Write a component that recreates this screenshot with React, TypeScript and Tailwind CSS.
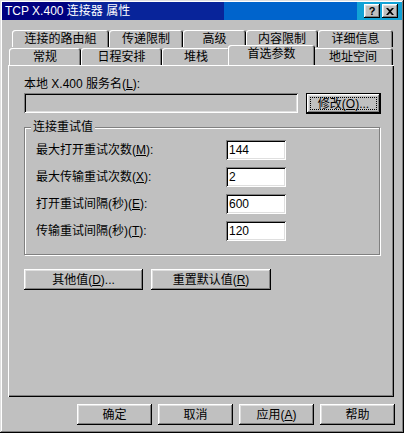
import React from 'react';

const raised =
  'bg-[#c0c0c0] shadow-[inset_-1px_-1px_0_#000,inset_1px_1px_0_#fff,inset_-2px_-2px_0_#808080,inset_2px_2px_0_#dfdfdf]';
const sunken =
  'shadow-[inset_1px_1px_0_#808080,inset_-1px_-1px_0_#fff,inset_2px_2px_0_#000,inset_-2px_-2px_0_#dfdfdf]';

const Key = ({ k }: { k: string }) => <u className="underline underline-offset-1">{k}</u>;

const Tab = ({ label, w, selected }: { label: string; w: number; selected?: boolean }) => (
  <div
    style={{ width: w }}
    className={`flex items-center justify-center rounded-t-[3px] bg-[#c0c0c0] shadow-[inset_1px_1px_0_#fff,inset_-1px_0_0_#000,inset_-2px_0_0_#808080] ${
      selected ? 'relative z-10 -mx-[2px] -mt-[2px] h-[20px] pb-[2px]' : 'h-[17px] pt-[1px]'
    }`}
  >
    {label}
  </div>
);

const Btn = ({ children, w }: { children: React.ReactNode; w: number }) => (
  <div style={{ width: w }} className={`flex h-[21px] items-center justify-center ${raised}`}>
    {children}
  </div>
);

const rows = [
  { label: '最大打开重试次数', key: 'M', value: '144' },
  { label: '最大传输重试次数', key: 'X', value: '2' },
  { label: '打开重试间隔(秒)', key: 'E', value: '600' },
  { label: '传输重试间隔(秒)', key: 'T', value: '120' },
];

export default function App() {
  return (
    <div className="h-[433px] w-[404px] overflow-hidden bg-[#c0c0c0] font-['Liberation_Sans','Noto_Sans_CJK_SC',sans-serif] text-[12px] leading-[14px] text-black shadow-[inset_-1px_-1px_0_#000,inset_1px_1px_0_#dfdfdf,inset_-2px_-2px_0_#808080,inset_2px_2px_0_#fff]">
      {/* title bar */}
      <div className="mx-[2px] mt-[2px] flex h-[18px] items-center bg-[linear-gradient(to_right,#000080_0,#000080_68px,#08249a_68px,#08249a_222px,#0064cc_222px,#0064cc_355px,#12a2d6_355px)] pl-[3px] pr-[4px]">
        <span className="text-white">TCP X.400 连接器 属性</span>
        <div className="ml-auto flex gap-[2px]">
          <div className={`flex h-[14px] w-[16px] items-center justify-center text-[11px] font-bold leading-none ${raised}`}>?</div>
          <div className={`flex h-[14px] w-[16px] items-center justify-center ${raised}`}>
            <svg width="8" height="7" viewBox="0 0 8 7">
              <path d="M0 0h2l2 2 2-2h2L5 3.5 8 7H6L4 5 2 7H0l3-3.5z" fill="#000" />
            </svg>
          </div>
        </div>
      </div>

      {/* tabs */}
      <div className="ml-[12px] mt-[10px] flex">
        <Tab label="连接的路由組" w={97} />
        <Tab label="传递限制" w={74} />
        <Tab label="高级" w={63} />
        <Tab label="内容限制" w={72} />
        <Tab label="详细信息" w={75} />
      </div>
      <div className="ml-[9px] flex items-end">
        <Tab label="常规" w={72} />
        <Tab label="日程安排" w={81} />
        <Tab label="堆栈" w={68} />
        <Tab label="首选参数" w={87} selected />
        <Tab label="地址空间" w={80} />
      </div>

      {/* panel */}
      <div className="ml-[8px] h-[332px] w-[386px] pl-[16px] shadow-[inset_1px_1px_0_#fff,inset_-1px_-1px_0_#000,inset_-2px_-2px_0_#808080]">
        <div className="pt-[12px]">
          本地 X.400 服务名(<Key k="L" />):
        </div>
        <div className="mt-[2px] flex items-start gap-[8px]">
          <div className={`h-[20px] w-[274px] bg-[#c0c0c0] ${sunken}`} />
          <div className="relative h-[21px] w-[75px] border border-black">
            <div className={`flex h-full w-full items-center justify-center ${raised}`}>
              修改(<Key k="O" />)...
            </div>
            <div className="absolute inset-[3px] border border-dotted border-black" />
          </div>
        </div>

        <div className="relative mt-[13px] h-[128px] w-[356px] border border-[#808080] shadow-[1px_1px_0_#fff,inset_1px_1px_0_#fff]">
          <div className="absolute -top-[8px] left-[6px] bg-[#c0c0c0] px-[2px]">连接重试值</div>
          <div className="flex flex-col gap-[7px] pl-[11px] pt-[12px]">
            {rows.map((r) => (
              <div key={r.key} className="flex items-center">
                <div className="w-[190px]">
                  {r.label}(<Key k={r.key} />):
                </div>
                <div className={`flex h-[20px] w-[60px] items-center bg-white pl-[3px] ${sunken}`}>{r.value}</div>
              </div>
            ))}
          </div>
        </div>

        <div className="mt-[14px] flex gap-[8px]">
          <Btn w={119}>
            其他值(<Key k="D" />)...
          </Btn>
          <Btn w={120}>
            重置默认值(<Key k="R" />)
          </Btn>
        </div>
      </div>

      {/* dialog buttons */}
      <div className="mt-[7px] flex justify-end gap-[6px] pr-[9px]">
        <Btn w={75}>确定</Btn>
        <Btn w={75}>取消</Btn>
        <Btn w={75}>
          应用(<Key k="A" />)
        </Btn>
        <Btn w={75}>帮助</Btn>
      </div>
    </div>
  );
}
